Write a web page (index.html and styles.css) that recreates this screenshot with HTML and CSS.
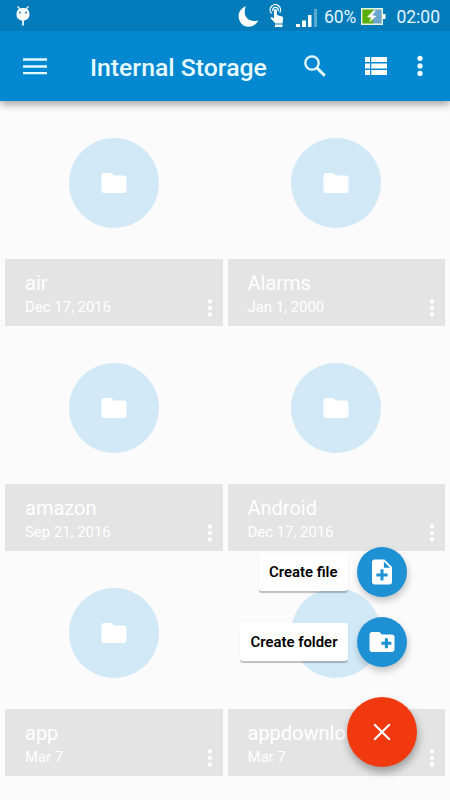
FILE: index.html
```html
<!DOCTYPE html>
<html lang="en">
<head>
<meta charset="utf-8">
<title>Internal Storage</title>
<link rel="stylesheet" href="styles.css">
</head>
<body>
<svg class="defs" aria-hidden="true">
  <symbol id="folder" viewBox="0 0 24 24"><path d="M10 4H4c-1.100 0-2 .9-2 2v12c0 1.100.9 2 2 2h16c1.100 0 2-.9 2-2V8c0-1.100-.9-2-2-2h-8z"/></symbol>
  <symbol id="more" viewBox="0 0 24 24"><circle cx="12" cy="6" r="2"/><circle cx="12" cy="12" r="2"/><circle cx="12" cy="18" r="2"/></symbol>
</svg>
<div class="screen">
  <header class="header">
    <div class="status">
      <svg class="droid" width="14" height="21" viewBox="0 0 14 21"><path d="M1.500.5 4 3M12.500.5 10 3" stroke="#fff" stroke-width="1.300"/><path d="M.5 8.500C.5 4 3 2 7 2s6.500 2 6.500 6.500C13.500 12 11 14.500 7 14.500S.5 12 .5 8.500z" fill="#fff"/><path d="M7 14v5.500" stroke="#d5f0ff" stroke-width="2"/><circle cx="4" cy="6.500" r=".9" fill="#07a"/><circle cx="10" cy="6.500" r=".9" fill="#07a"/></svg>
      <svg class="moon" width="21" height="21" viewBox="0 0 21 21"><path d="M8 .3C4 1.500.6 5.400.6 10.200.6 16 5 20.700 10.500 20.700c4.300 0 8-2.300 9.800-6.500-6 2.700-13.800-1.200-13.500-7.700C6.800 4 7 2 8 .3z" fill="#fff"/></svg>
      <svg class="touch" width="16" height="24" viewBox="0 0 16 24"><path d="M2.600 9.500A5.200 5.200 0 1 1 10.800 8.500M4 7a2.700 2.700 0 1 1 5 0" fill="none" stroke="#fff" stroke-width="1.300"/><path d="M5 6.500a1.500 1.500 0 0 1 3 0V11l5 1.500c.9.300 1.200.9 1.100 1.800L13.500 19.500H6.500L1.300 14c.7-1.300 2-1 3.700.5zM6 20.500h7.500V23H6z" fill="#fff"/></svg>
      <svg class="signal" width="22" height="18" viewBox="0 0 22 18"><path d="M0 15h4v3H0zM6 11.500h4V18H6zM12 6h3.500v12H12z" fill="#fff"/><path d="M18 0h3v18h-3z" fill="#fff" opacity=".35"/></svg>
      <span class="percent">60%</span>
      <svg class="battery" width="25" height="17" viewBox="0 0 25 17"><path d="M1 1h20v15H1z" fill="#6ca5cc"/><path d="M1 1h11v15H1z" fill="#5aae0b"/><path d="M.7.7h20.600v15.600H.7z" fill="none" stroke="#e8f3dd" stroke-width="1.400"/><path d="M22 6h2.500v5H22z" fill="#fff"/><path d="M12.500 2.500 6 9l4.200.7L8 14.500 15.500 8l-4.300-.8 3.800-4.700z" fill="#fff"/></svg>
      <span class="clock">02:00</span>
    </div>
    <div class="toolbar">
      <svg class="menu" width="24" height="17" viewBox="0 0 24 17"><path d="M0 1.500h24M0 8.500h24M0 15.200h24" stroke="#e2faff" stroke-width="2.300"/></svg>
      <h1 class="title">Internal Storage</h1>
      <svg class="search" width="22" height="22" viewBox="0 0 22 22" fill="none" stroke="#e7faff" stroke-width="2.300"><circle cx="8" cy="8" r="6.700"/><path d="m13 13 7.800 7.800" stroke-width="3"/></svg>
      <svg class="list" width="22" height="18" viewBox="0 0 22 18" fill="#fff"><path d="M0 0h5v5H0zM6.300 0H22v5H6.300zM0 6.500h5v5H0zM6.300 6.500H22v5H6.300zM0 13h5v5H0zM6.300 13H22v5H6.300z"/></svg>
      <svg class="dots" width="6" height="22" viewBox="0 0 6 22" fill="#f0fcff"><circle cx="3" cy="3.300" r="2.600"/><circle cx="3" cy="10.900" r="2.600"/><circle cx="3" cy="18.400" r="2.600"/></svg>
    </div>
  </header>

  <main class="grid">
    <article class="card"><div class="thumb"><span class="disc"><svg class="folder"><use href="#folder"/></svg></span></div><div class="info"><h2 class="name">air</h2><p class="date">Dec 17, 2016</p><svg class="more"><use href="#more"/></svg></div></article>
    <article class="card"><div class="thumb"><span class="disc"><svg class="folder"><use href="#folder"/></svg></span></div><div class="info"><h2 class="name">Alarms</h2><p class="date">Jan 1, 2000</p><svg class="more"><use href="#more"/></svg></div></article>
    <article class="card"><div class="thumb"><span class="disc"><svg class="folder"><use href="#folder"/></svg></span></div><div class="info"><h2 class="name">amazon</h2><p class="date">Sep 21, 2016</p><svg class="more"><use href="#more"/></svg></div></article>
    <article class="card"><div class="thumb"><span class="disc"><svg class="folder"><use href="#folder"/></svg></span></div><div class="info"><h2 class="name">Android</h2><p class="date">Dec 17, 2016</p><svg class="more"><use href="#more"/></svg></div></article>
    <article class="card"><div class="thumb"><span class="disc"><svg class="folder"><use href="#folder"/></svg></span></div><div class="info"><h2 class="name">app</h2><p class="date">Mar 7</p><svg class="more"><use href="#more"/></svg></div></article>
    <article class="card"><div class="thumb"><span class="disc"></span></div><div class="info"><h2 class="name">appdownlo</h2><p class="date">Mar 7</p><svg class="more"><use href="#more"/></svg></div></article>
  </main>

  <div class="actions">
    <div class="action"><span class="label">Create file</span><button class="mini" aria-label="Create file"><svg width="30" height="30" viewBox="0 0 24 24"><path fill="#fff" d="M6 2c-1.100 0-2 .9-2 2v16c0 1.100.9 2 2 2h12c1.100 0 2-.9 2-2V8l-6-6zm10.500 13.500h-3.300v3.300h-2.400v-3.300H7.500v-2.400h3.300V9.800h2.400v3.300h3.300zM13.500 8.500V3.500L18.500 8.500z"/></svg></button></div>
    <div class="action"><span class="label">Create folder</span><button class="mini" aria-label="Create folder"><svg width="30" height="30" viewBox="0 0 24 24"><path fill="#fff" d="M20 6h-8l-2-2H4c-1.100 0-2 .9-2 2v12c0 1.100.9 2 2 2h16c1.100 0 2-.9 2-2V8c0-1.100-.9-2-2-2zm-.5 8.200h-2.800V17h-2.400v-2.800h-2.800v-2.400h2.800V9h2.400v2.800h2.800z"/></svg></button></div>
    <button class="fab" aria-label="Close"><svg width="18" height="18" viewBox="0 0 18 18"><path d="m1.200 1.200 15.600 15.600M16.800 1.200 1.200 16.800" stroke="#fff" stroke-width="2.200"/></svg></button>
  </div>
</div>
</body>
</html>
```

FILE: styles.css
```css
* { box-sizing: border-box; }
body { margin: 0; font-family: Roboto, sans-serif; background: #fbfbfb; }
h1, h2, p { margin: 0; font-weight: 400; }
svg { display: block; flex: none; }
.defs { position: absolute; width: 0; height: 0; }
.screen { position: relative; width: 450px; height: 800px; overflow: hidden; background: #fbfbfb; }

.header { position: relative; height: 101px; background: #0288d1; box-shadow: 0 3px 8px rgba(0, 0, 0, .38); }
.status { display: flex; align-items: center; height: 31px; background: #027bbb; color: #e2f6ff; padding: 1px 10px 0 16px; }
.droid { margin-right: auto; }
.moon { margin-right: 10px; }
.touch { margin-right: 11px; margin-top: -1px; }
.signal { margin-right: 6px; margin-top: 3px; }
.percent { width: 33px; padding-top: 1px; font-size: 17.500px; line-height: 20px; letter-spacing: -.1px; margin-right: 4px; }
.battery { margin-right: 9px; }
.clock { width: 45px; padding-top: 1px; font-size: 17.500px; line-height: 20px; text-align: right; }

.toolbar { display: flex; align-items: center; height: 70px; padding: 0 26px 0 23px; }
.title { width: 214px; margin-left: 43px; padding-top: 3px; font-size: 24.800px; line-height: 30px; font-weight: 500; color: #e7faff; white-space: nowrap; }
.list { margin-left: 39px; }
.dots { margin-left: auto; margin-right: 1px; }

.grid { display: grid; grid-template-columns: 217.500px 217.500px; grid-auto-rows: 220px; gap: 5px; padding: 5px; }
.card { display: flex; flex-direction: column; }
.thumb { display: flex; align-items: center; justify-content: center; height: 153px; }
.disc { display: flex; align-items: center; justify-content: center; width: 90px; height: 90px; border-radius: 50%; background: #d1e8f6; }
.folder { width: 30px; height: 30px; fill: #fff; }
.info { display: grid; grid-template-columns: 1fr 25px; height: 67px; padding: 11px 0 0 20px; background: #e4e4e4; color: #fff; align-content: start; }
.name { grid-column: 1 / 3; font-size: 20px; line-height: 26px; }
.date { font-size: 14.900px; line-height: 22px; }
.more { width: 26px; height: 26px; margin: -1px 0 0 -1px; fill: #fff; }

.actions { position: absolute; right: 33px; bottom: 33px; display: flex; flex-direction: column; align-items: flex-end; }
.action { display: flex; align-items: center; gap: 9.500px; margin: 0 10px 20px 0; }
.action + .action { margin-bottom: 30px; }
.label { height: 38px; padding: 0 10px; border-radius: 3px; background: #fff; box-shadow: 0 2px 1px rgba(0, 0, 0, .24); font-size: 14.900px; line-height: 38px; font-weight: 600; color: #000; white-space: nowrap; }
button { display: flex; align-items: center; justify-content: center; padding: 0; border: 0; border-radius: 50%; }
.mini { width: 50px; height: 50px; background: #1e90d4; box-shadow: 1px 4px 7px rgba(0, 0, 0, .22); }
.fab { width: 70px; height: 70px; background: #f0390f; box-shadow: 1px 5px 9px rgba(0, 0, 0, .32); }
```
